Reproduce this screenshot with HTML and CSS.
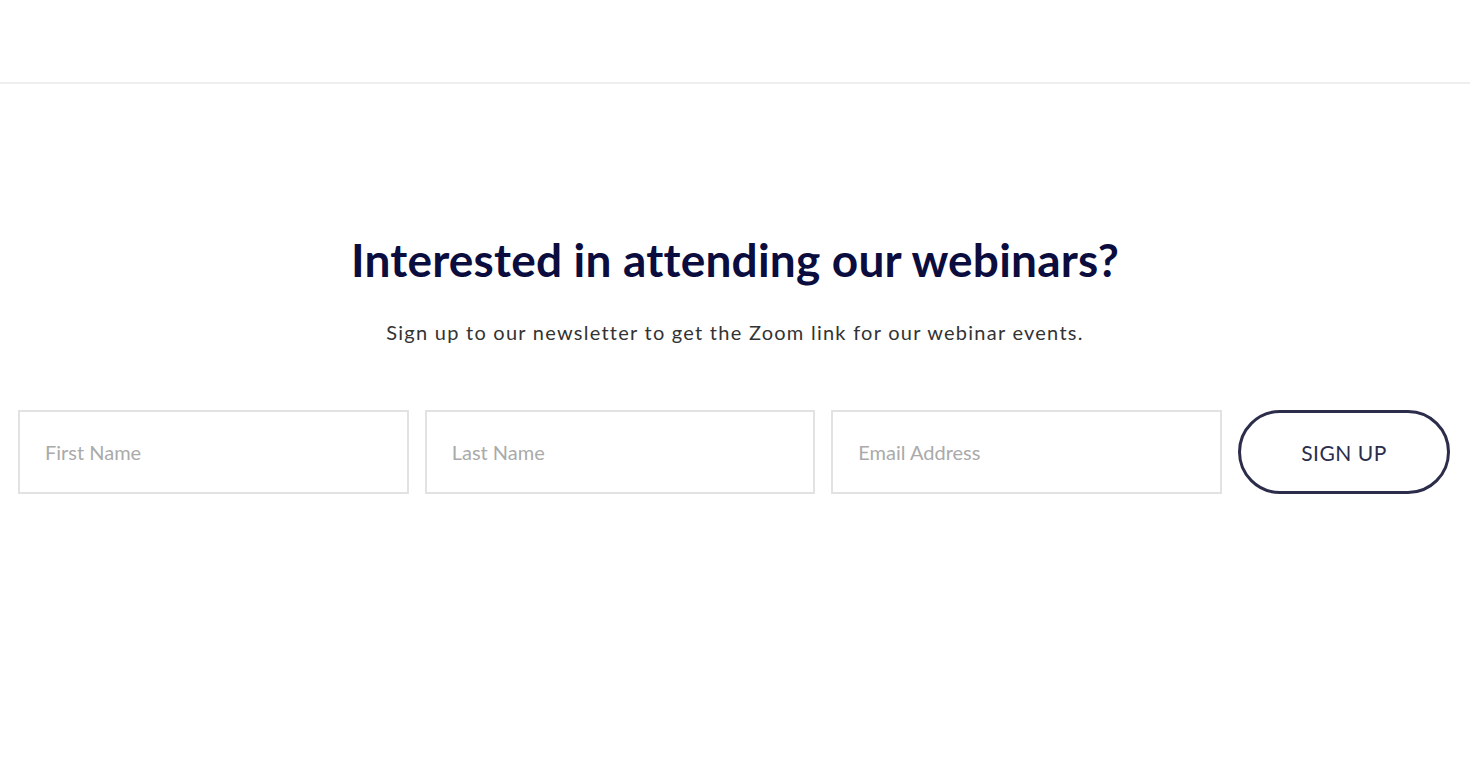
FILE: index.html
```html
<!DOCTYPE html>
<html lang="en">
<head>
<meta charset="utf-8">
<title>Webinars</title>
<link rel="stylesheet" href="styles.css">
</head>
<body>
<header class="site-header"></header>
<main class="signup">
  <h1 class="signup-title">Interested in attending our webinars?</h1>
  <p class="signup-sub">Sign up to our newsletter to get the Zoom link for our webinar events.</p>
  <form class="signup-form">
    <input class="field" type="text" placeholder="First Name">
    <input class="field" type="text" placeholder="Last Name">
    <input class="field" type="email" placeholder="Email Address">
    <button class="btn" type="button">SIGN UP</button>
  </form>
</main>
</body>
</html>
```
FILE: styles.css
```css
* { box-sizing: border-box; }
html, body { margin: 0; padding: 0; background: #fff; }
body { font-family: "Lato", "Noto Sans", sans-serif; width: 1470px; height: 757px; overflow: hidden; font-variant-ligatures: none; }
.site-header { height: 84px; border-bottom: 2px solid #eeeeee; }
.signup { display: flex; flex-direction: column; align-items: center; padding-top: 144px; }
.signup-title { margin: 0; font-size: 46px; line-height: 64px; font-weight: 700; color: #0b0d3f; letter-spacing: 0.2px; }
.signup-sub { margin: 26px 0 0; font-size: 20px; line-height: 28px; color: #333; letter-spacing: 1.25px; }
.signup-form { display: flex; gap: 16px; width: 100%; padding: 0 20px 0 18px; margin-top: 64px; }
.field { flex: 1 1 0; min-width: 0; height: 84px; border: 2px solid #e2e2e2; border-radius: 0; padding: 0 25px; font-family: inherit; font-size: 20px; color: #333; background: #fff; outline: none; }
.field::placeholder { color: #aaaaaa; }
.btn { flex: 0 0 212px; height: 84px; border: 3px solid #2b2d4b; border-radius: 42px; background: #fff; color: #2b2d4b; font-family: inherit; font-size: 21px; letter-spacing: 0.5px; cursor: pointer; }
```
